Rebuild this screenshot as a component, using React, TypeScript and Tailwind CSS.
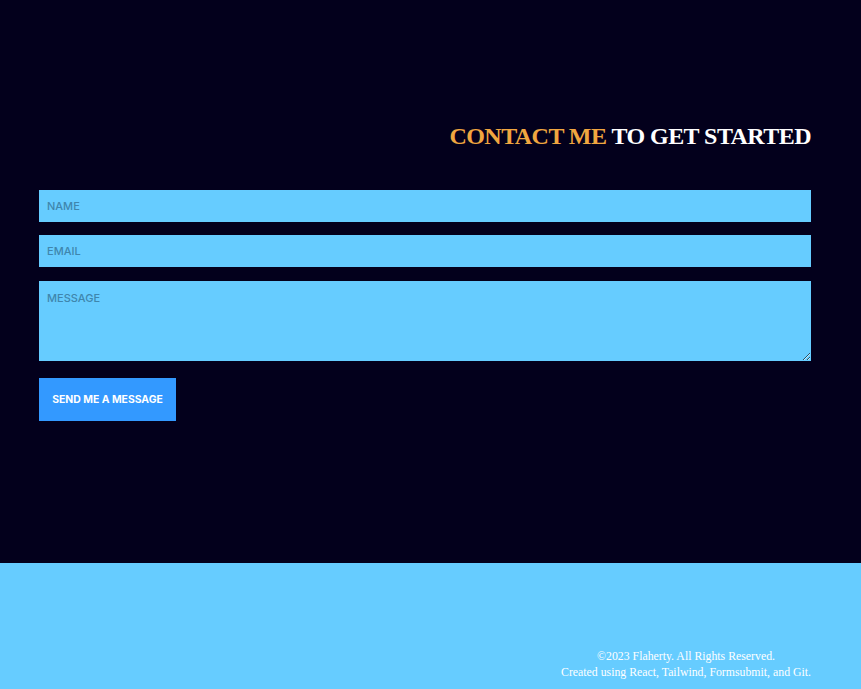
import React from 'react';

const serif = { fontFamily: '"Liberation Serif", "DejaVu Serif", serif' };

const Contact = () => {
  return (
    <section className="bg-[#03001c] h-[563px] pt-[121px]">
      <div className="ml-[39px] w-[772px]">
        {/* Heading */}
        <h2
          className="text-right text-[24px] font-bold leading-[30px] text-white tracking-[-0.55px] [font-family:'Liberation_Serif',serif]"
        >
          <span className="text-[#f0a640]">CONTACT ME</span> TO GET STARTED
        </h2>

        {/* Form */}
        <form className="mt-[39px] flex flex-col [font-family:Inter,'Liberation_Sans',sans-serif]">
          <input
            type="text"
            placeholder="NAME"
            className="h-[32px] w-full bg-[#66ccff] px-2 text-[11px] font-medium text-[#03001c] outline-none placeholder:text-[#3f86ad]"
          />
          <input
            type="email"
            placeholder="EMAIL"
            className="mt-[13px] h-[32px] w-full bg-[#66ccff] px-2 text-[11px] font-medium text-[#03001c] outline-none placeholder:text-[#3f86ad]"
          />
          <textarea
            placeholder="MESSAGE"
            className="mt-[14px] h-[80px] w-full bg-[#66ccff] px-2 py-[9px] text-[11px] font-medium text-[#03001c] outline-none placeholder:text-[#3f86ad]"
          />
          <div className="mt-[17px]">
            <button
              type="button"
              className="h-[43px] w-[137px] bg-[#3399ff] text-[10.4px] font-bold text-white"
            >
              SEND ME A MESSAGE
            </button>
          </div>
        </form>
      </div>
    </section>
  );
};

const Footer = () => {
  return (
    <footer className="bg-[#66ccff] h-[126px] flex justify-end pr-[50px] pt-[85px]">
      <div className="text-center text-[11.8px] leading-[16px] text-white" style={serif}>
        <p>©2023 Flaherty. All Rights Reserved.</p>
        <p>Created using React, Tailwind, Formsubmit, and Git.</p>
      </div>
    </footer>
  );
};

export default function App() {
  return (
    <div className="min-h-screen bg-[#03001c]">
      <Contact />
      <Footer />
    </div>
  );
}
